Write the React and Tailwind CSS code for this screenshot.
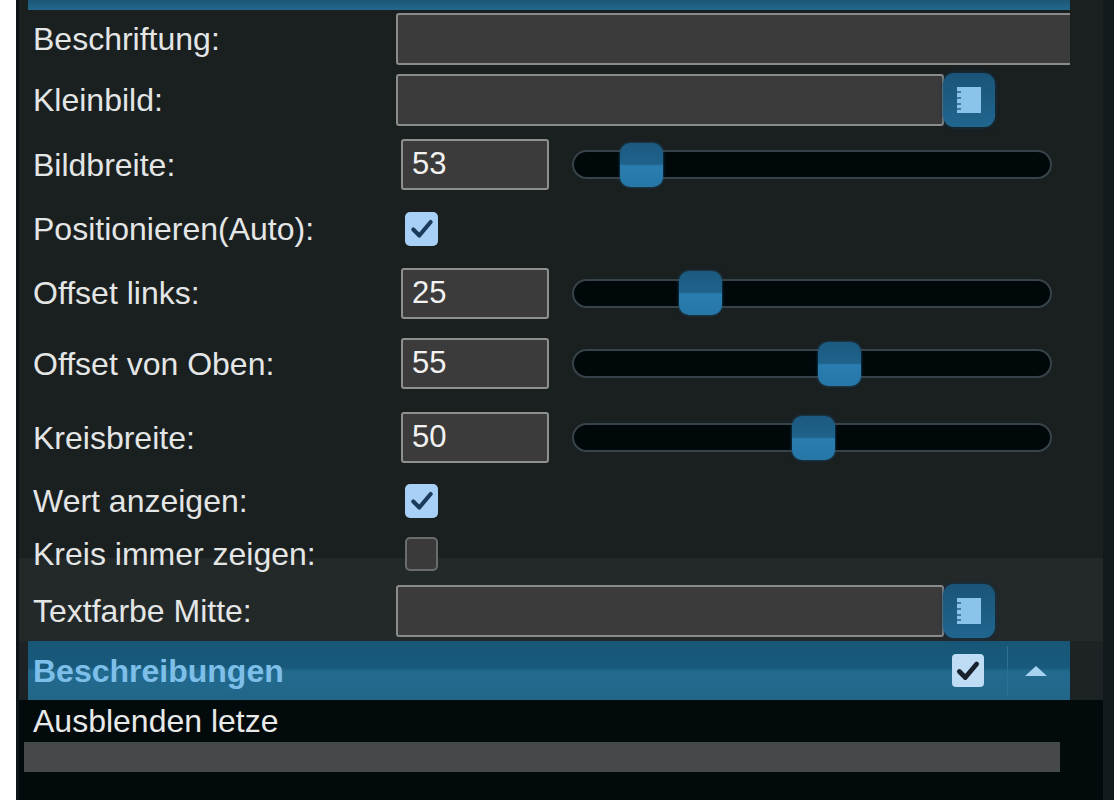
const font = { fontFamily: '"Liberation Sans", Arial, sans-serif' };

const CheckBox = ({ checked, light }) => {
  if (!checked) {
    return (
      <div className="w-[33px] h-[34px] rounded-[5px] bg-[#3a3a3b] border-2 border-[#6a6c6d]" />
    );
  }
  return (
    <div
      className={
        light
          ? "w-[32px] h-[33px] rounded-[4px] bg-[#bfdcf5] flex items-center justify-center"
          : "w-[33px] h-[34px] rounded-[5px] bg-[#a8d0f6] flex items-center justify-center"
      }
    >
      <svg width="26" height="26" viewBox="0 0 24 24">
        <path
          d="M4 12.5 L9.5 18 L20 5.5"
          fill="none"
          stroke={light ? "#18222c" : "#1b3b5c"}
          strokeWidth={light ? 4.4 : 3.8}
          strokeLinecap="round"
          strokeLinejoin="round"
        />
      </svg>
    </div>
  );
};

const ColorButton = () => (
  <div className="w-[52px] h-[54px] -ml-[1px] rounded-[11px] bg-[linear-gradient(to_bottom,#1a5478,#21668f)] flex items-center justify-center shadow-[0_0_4px_#0e3550]">
    <svg width="24" height="26" viewBox="0 0 24 26">
      <rect x="0" y="0" width="24" height="26" fill="#8cc3ea" />
      <rect x="0" y="4" width="4" height="2" fill="#3b7aa6" />
      <rect x="0" y="10" width="4" height="2" fill="#3b7aa6" />
      <rect x="0" y="16" width="4" height="2" fill="#3b7aa6" />
      <rect x="0" y="21" width="4" height="2" fill="#3b7aa6" />
    </svg>
  </div>
);

const Slider = ({ value, min, max }) => {
  const left = ((value - min) / (max - min)) * (480 - 44);
  return (
    <div className="relative ml-[23px] w-[480px] h-[29px] rounded-full bg-[#01080a] border-2 border-[#37434a]">
      <div
        className="absolute top-1/2 -translate-y-1/2 w-[43px] h-[44px] rounded-[10px] bg-[linear-gradient(to_bottom,#1c5a80_0%,#1e628b_48%,#2a7db0_52%,#2677a8_100%)] shadow-[0_0_3px_#1a5a80]"
        style={{ left }}
      />
    </div>
  );
};

const NumberInput = ({ value }) => (
  <div className="ml-[5px] w-[148px] h-[51px] bg-[#3c3b3b] border-2 border-[#8e8f8f] rounded-[3px] flex items-center pl-[9px] text-[31px] text-[#f2f2f2]">
    {value}
  </div>
);

const Label = ({ children }) => (
  <div className="w-[363px] shrink-0 text-[32px] leading-none text-[#e4e6e6]">
    {children}
  </div>
);

export default function App() {
  return (
    <div className="w-[1114px] h-[800px] flex bg-white overflow-hidden" style={font}>
      <div className="w-[16px] shrink-0 bg-white" />
      <div className="w-[1087px] shrink-0 border-l-[3px] border-[#0d1417] bg-[#1a1f20] flex flex-col overflow-hidden">
        {/* header remnant */}
        <div className="h-[10px] ml-[9px] w-[1042px] bg-[linear-gradient(to_bottom,#1b5675,#22698d)]" />

        <div className="h-[58px] flex items-center pl-[14px]">
          <Label>Beschriftung:</Label>
          <div className="w-[674px] h-[52px] bg-[#3c3b3b] border-2 border-r-0 border-[#8a8b8b] rounded-l-[3px]" />
        </div>

        <div className="h-[63px] flex items-center pl-[14px]">
          <Label>Kleinbild:</Label>
          <div className="w-[548px] h-[52px] bg-[#3c3b3b] border-2 border-[#8a8b8b] rounded-[3px]" />
          <ColorButton />
        </div>

        <div className="h-[67px] flex items-center pl-[14px]">
          <Label>Bildbreite:</Label>
          <NumberInput value="53" />
          <Slider value={53} min={0} max={500} />
        </div>

        <div className="h-[62px] flex items-center pl-[14px]">
          <Label>Positionieren(Auto):</Label>
          <div className="ml-[9px]">
            <CheckBox checked />
          </div>
        </div>

        <div className="h-[66px] flex items-center pl-[14px]">
          <Label>Offset links:</Label>
          <NumberInput value="25" />
          <Slider value={24} min={0} max={100} />
        </div>

        <div className="h-[75px] flex items-center pl-[14px]">
          <Label>Offset von Oben:</Label>
          <NumberInput value="55" />
          <Slider value={56} min={0} max={100} />
        </div>

        <div className="h-[73px] flex items-center pl-[14px]">
          <Label>Kreisbreite:</Label>
          <NumberInput value="50" />
          <Slider value={50} min={0} max={100} />
        </div>

        <div className="h-[53px] flex items-center pl-[14px]">
          <Label>Wert anzeigen:</Label>
          <div className="ml-[9px]">
            <CheckBox checked />
          </div>
        </div>

        <div className="h-[53px] flex items-center pl-[14px] bg-[linear-gradient(to_bottom,#1a1f20_31px,#232829_31px)]">
          <Label>Kreis immer zeigen:</Label>
          <div className="ml-[9px]">
            <CheckBox checked={false} />
          </div>
        </div>

        <div className="h-[61px] flex items-center pl-[14px] bg-[#232829]">
          <Label>Textfarbe Mitte:</Label>
          <div className="w-[548px] h-[52px] bg-[#3c3b3b] border-2 border-[#8a8b8b] rounded-[3px]" />
          <ColorButton />
        </div>

        {/* section header */}
        <div className="h-[59px] bg-[#1d2325] pl-[9px]">
          <div className="w-[1042px] h-full flex items-center bg-[linear-gradient(to_bottom,#175677_0%,#185a7c_45%,#226b8f_52%,#216689_100%)]">
            <div className="flex-1 pl-[5px] text-[32px] font-bold leading-none text-[#7dbfe9]">
              Beschreibungen
            </div>
            <div className="mr-[23px]">
              <CheckBox checked light />
            </div>
            <div className="w-[56px] h-[50px] mr-[7px] border-l border-[#2a7097] flex items-center justify-center">
              <svg width="22" height="10" viewBox="0 0 22 10">
                <polygon points="11,0 22,10 0,10" fill="#a6d3ef" />
              </svg>
            </div>
          </div>
        </div>

        <div className="flex-1 bg-[#020a0c]">
          <div className="h-[42px] flex items-center pl-[14px] text-[32px] leading-none text-[#e8e9e9]">
            Ausblenden letze
          </div>
          <div className="ml-[5px] w-[1036px] h-[30px] bg-[#45494b]" />
        </div>
      </div>
      <div className="flex-1 bg-[#121a1d]" />
    </div>
  );
}
